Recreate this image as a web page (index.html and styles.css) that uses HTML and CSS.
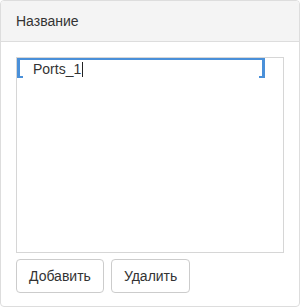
FILE: index.html
```html
<!DOCTYPE html>
<html lang="ru">
<head>
  <meta charset="UTF-8" />
  <title>Название</title>
  <link rel="stylesheet" href="styles.css">
</head>
<body>
  <div class="panel">
    <div class="panel-heading">Название</div>
    <div class="panel-body">
      <div class="list">
        <div class="item selected"><span>Ports_1</span><i class="caret"></i></div>
      </div>
      <div class="actions">
        <button class="btn">Добавить</button>
        <button class="btn">Удалить</button>
      </div>
    </div>
  </div>
</body>
</html>
```

FILE: styles.css
```css
body {
  margin: 0;
  font-family: "Liberation Sans", Arial, sans-serif;
  font-size: 14px;
  color: #333;
  background: #fff;
}
.panel {
  width: 300px;
  height: 307px;
  box-sizing: border-box;
  border: 1px solid #ddd;
  border-radius: 4px;
  overflow: hidden;
}
.panel-heading {
  padding: 10px 15px;
  line-height: 20px;
  background: #f4f4f4;
  border-bottom: 1px solid #ddd;
}
.panel-body {
  padding: 15px;
}
.list {
  height: 194px;
  border: 1px solid #d6d6d6;
  padding-right: 18px;
}
.item {
  height: 18px;
  line-height: 18px;
  padding-left: 13px;
  border-top: 2px solid #4a90d9;
  border-left: 3px solid #4a90d9;
  border-right: 3px solid #4a90d9;
  background:
    linear-gradient(#4a90d9, #4a90d9) left bottom / 3px 2px no-repeat,
    linear-gradient(#4a90d9, #4a90d9) right bottom / 3px 2px no-repeat;
  display: flex;
  align-items: center;
}
.caret {
  display: inline-block;
  width: 1px;
  height: 15px;
  margin-left: 1px;
  background: #222;
}
.actions {
  display: flex;
  gap: 7px;
  margin-top: 6px;
}
.btn {
  font-family: inherit;
  font-size: 14px;
  color: #333;
  background: #fff;
  border: 1px solid #ccc;
  border-radius: 4px;
  padding: 6px 12px;
  line-height: 20px;
}
```
